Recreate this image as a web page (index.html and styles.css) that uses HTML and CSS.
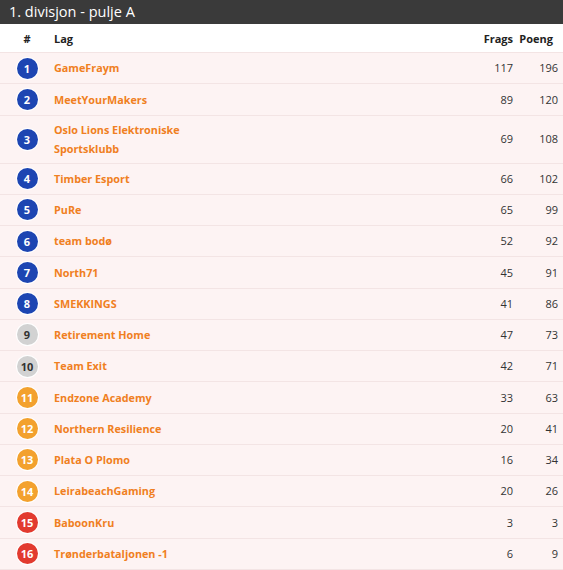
FILE: index.html
```html
<!DOCTYPE html>
<html>
<head>
<meta charset="utf-8">
<link rel="stylesheet" href="styles.css">
</head>
<body>
<div class="panel">
  <div class="title">1. divisjon - pulje A</div>
  <table class="standings">
    <thead>
      <tr>
        <th class="rank">#</th>
        <th class="team">Lag</th>
        <th class="num frags">Frags</th>
        <th class="num poeng">Poeng</th>
      </tr>
    </thead>
    <tbody>
      <tr><td class="rank"><span class="badge blue">1</span></td><td class="team">GameFraym</td><td class="num frags">117</td><td class="num poeng">196</td></tr>
      <tr><td class="rank"><span class="badge blue">2</span></td><td class="team">MeetYourMakers</td><td class="num frags">89</td><td class="num poeng">120</td></tr>
      <tr><td class="rank"><span class="badge blue">3</span></td><td class="team">Oslo Lions Elektroniske<br>Sportsklubb</td><td class="num frags">69</td><td class="num poeng">108</td></tr>
      <tr><td class="rank"><span class="badge blue">4</span></td><td class="team">Timber Esport</td><td class="num frags">66</td><td class="num poeng">102</td></tr>
      <tr><td class="rank"><span class="badge blue">5</span></td><td class="team">PuRe</td><td class="num frags">65</td><td class="num poeng">99</td></tr>
      <tr><td class="rank"><span class="badge blue">6</span></td><td class="team">team bodø</td><td class="num frags">52</td><td class="num poeng">92</td></tr>
      <tr><td class="rank"><span class="badge blue">7</span></td><td class="team">North71</td><td class="num frags">45</td><td class="num poeng">91</td></tr>
      <tr><td class="rank"><span class="badge blue">8</span></td><td class="team">SMEKKINGS</td><td class="num frags">41</td><td class="num poeng">86</td></tr>
      <tr><td class="rank"><span class="badge gray">9</span></td><td class="team">Retirement Home</td><td class="num frags">47</td><td class="num poeng">73</td></tr>
      <tr><td class="rank"><span class="badge gray">10</span></td><td class="team">Team Exit</td><td class="num frags">42</td><td class="num poeng">71</td></tr>
      <tr><td class="rank"><span class="badge orange">11</span></td><td class="team">Endzone Academy</td><td class="num frags">33</td><td class="num poeng">63</td></tr>
      <tr><td class="rank"><span class="badge orange">12</span></td><td class="team">Northern Resilience</td><td class="num frags">20</td><td class="num poeng">41</td></tr>
      <tr><td class="rank"><span class="badge orange">13</span></td><td class="team">Plata O Plomo</td><td class="num frags">16</td><td class="num poeng">34</td></tr>
      <tr><td class="rank"><span class="badge orange">14</span></td><td class="team">LeirabeachGaming</td><td class="num frags">20</td><td class="num poeng">26</td></tr>
      <tr><td class="rank"><span class="badge red">15</span></td><td class="team">BaboonKru</td><td class="num frags">3</td><td class="num poeng">3</td></tr>
      <tr><td class="rank"><span class="badge red">16</span></td><td class="team">Trønderbataljonen -1</td><td class="num frags">6</td><td class="num poeng">9</td></tr>
    </tbody>
  </table>
</div>
</body>
</html>
```
FILE: styles.css
```css
html, body {
  margin: 0;
  padding: 0;
  background: #ffffff;
}
body {
  font-family: "Open Sans", "Liberation Sans", sans-serif;
  color: #333333;
}
.panel {
  width: 563px;
}
.title {
  background: #3a3a3a;
  color: #ffffff;
  font-size: 14.5px;
  height: 24px;
  line-height: 24px;
  padding-left: 9px;
}
.standings {
  width: 100%;
  border-collapse: collapse;
  table-layout: fixed;
}
.standings th {
  font-weight: 700;
  font-size: 11px;
  color: #222222;
  height: 28px;
  padding: 0;
  text-align: left;
  border-bottom: 1px solid #f3e4e4;
  background: #ffffff;
}
.standings td {
  background: #fdf3f3;
  border-bottom: 1px solid #f3e4e4;
  padding: 4px 0;
  line-height: 19.5px;
  font-size: 11px;
  vertical-align: middle;
}
.standings tbody tr {
  height: 31.25px;
}
.standings .rank {
  width: 54px;
  text-align: center;
}
.standings th.rank {
  padding-right: 0;
}
.standings td.team {
  font-weight: 700;
  font-size: 10.8px;
  color: #f07f22;
}
.standings .num {
  text-align: right;
}
.standings .frags {
  width: 60px;
  padding-right: 0;
}
.standings .poeng {
  width: 40px;
  padding-right: 5px;
}
.standings th.poeng {
  padding-right: 10px;
}
.badge {
  display: flex;
  align-items: center;
  justify-content: center;
  width: 21px;
  height: 21px;
  margin: 0 auto;
  border-radius: 50%;
  font-size: 11px;
  line-height: 1;
  font-weight: 700;
  color: #ffffff;
  box-shadow: 0 0 0 1px #ffffff;
}
.badge.blue { background: #1d45b2; }
.badge.gray { background: #d2d2d2; color: #333333; }
.badge.orange { background: #f3a12e; }
.badge.red { background: #e23a2f; }
```
